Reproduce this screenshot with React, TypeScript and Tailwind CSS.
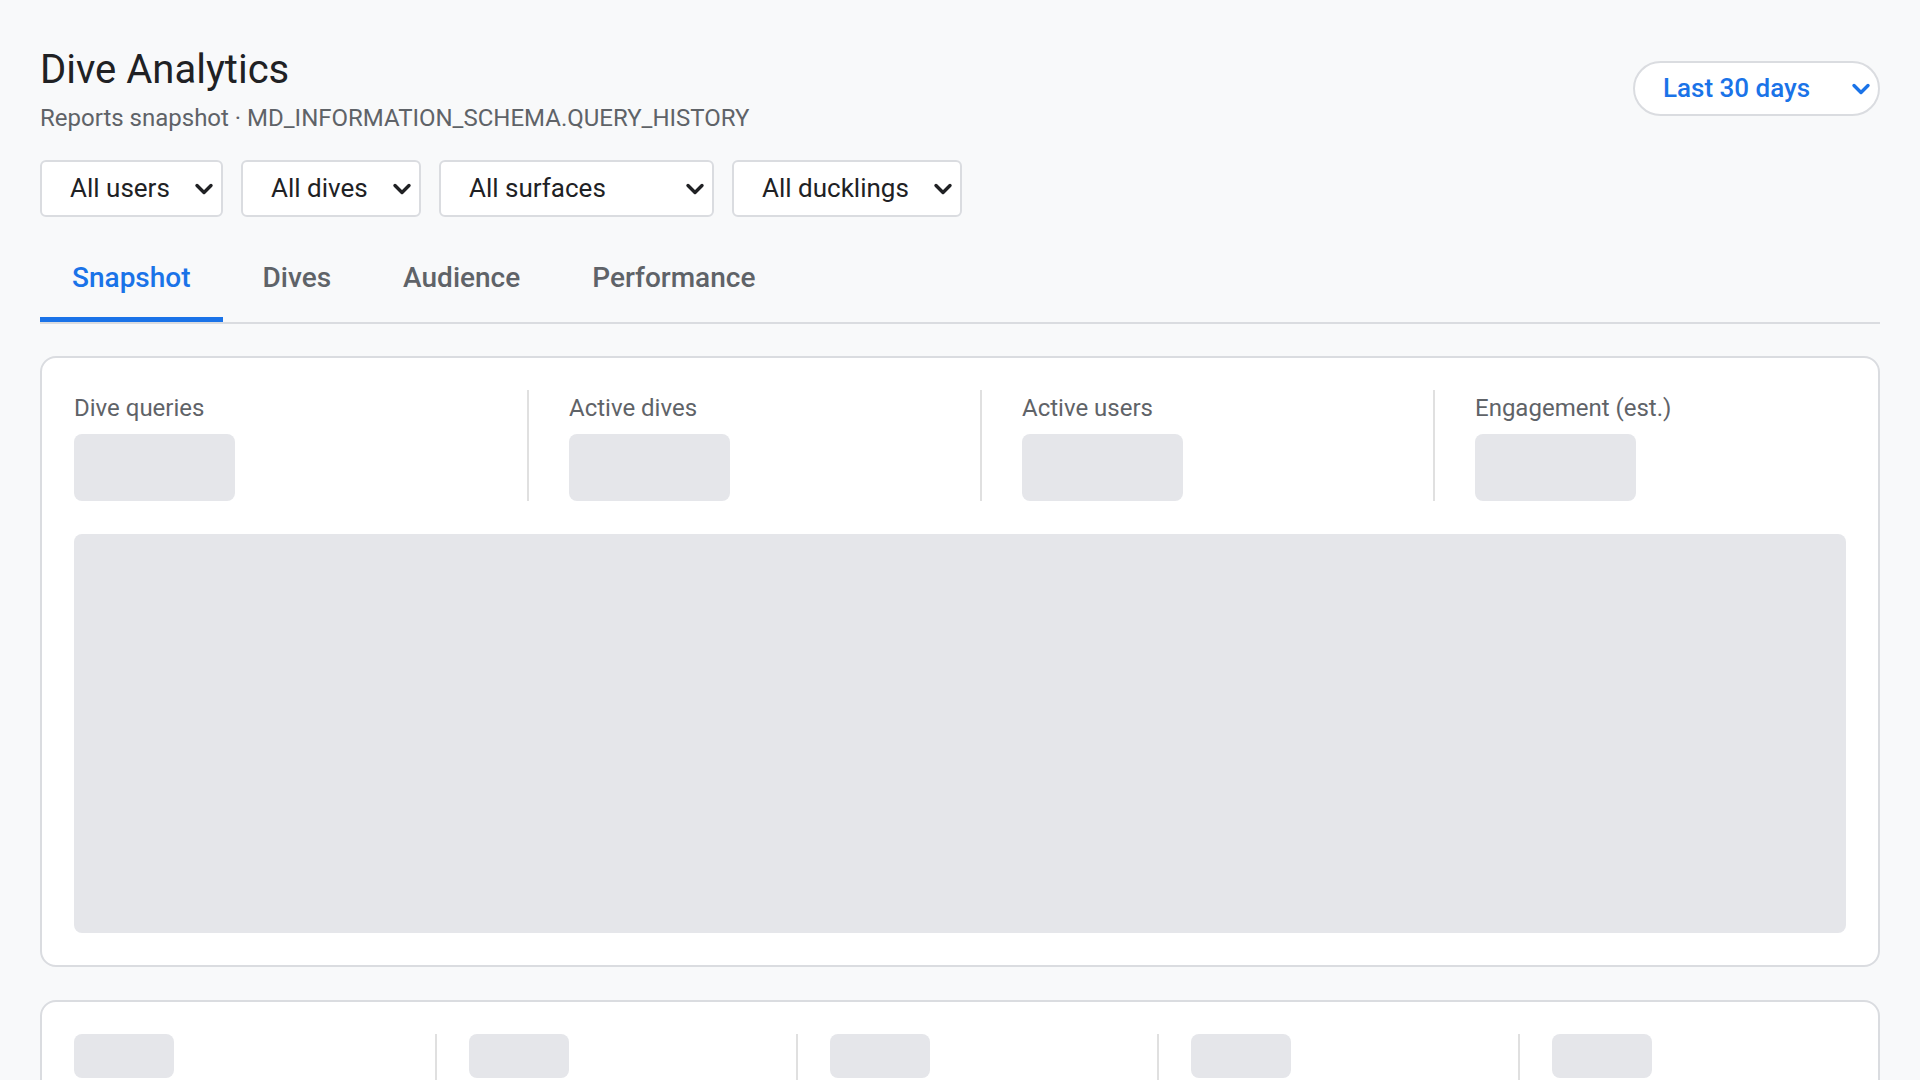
import React from "react";

const Chevron = ({ className = "" }: { className?: string }) => (
  <svg width="20" height="14" viewBox="0 0 20 14" className={className} fill="none">
    <path d="M3 3.5 L10 10.5 L17 3.5" stroke="currentColor" strokeWidth="3.4" strokeLinecap="round" strokeLinejoin="round" />
  </svg>
);

const filters = [
  { label: "All users", w: "w-[183px]" },
  { label: "All dives", w: "w-[180px]" },
  { label: "All surfaces", w: "w-[275px]" },
  { label: "All ducklings", w: "w-[230px]" },
];

const tabs = ["Snapshot", "Dives", "Audience", "Performance"];
const metrics = ["Dive queries", "Active dives", "Active users", "Engagement (est.)"];

export default function App() {
  return (
    <div
      className="min-h-screen bg-[#f8f9fa] px-10 pt-12 pb-10"
      style={{ fontFamily: "Roboto, 'Noto Sans', Arial, sans-serif" }}
    >
      <div className="flex items-start justify-between">
        <div>
          <h1 className="text-[40px] leading-[44px] font-normal text-[#202124]">Dive Analytics</h1>
          <p className="mt-[11px] text-[24px] leading-[30px] text-[#5f6368]">
            Reports snapshot · MD_INFORMATION_SCHEMA.QUERY_HISTORY
          </p>
        </div>
        <button className="mt-[13px] flex h-[55px] w-[247px] items-center justify-between rounded-full border-2 border-[#dadce0] bg-white pl-[28px] pr-[7px] text-[26px] font-medium text-[#1a73e8]">
          <span>Last 30 days</span>
          <Chevron className="text-[#1a73e8]" />
        </button>
      </div>

      <div className="mt-[27px] flex gap-[18px]">
        {filters.map((f) => (
          <button
            key={f.label}
            className={`${f.w} flex h-[57px] items-center justify-between rounded-[6px] border-2 border-[#dadce0] bg-white pl-[28px] pr-[7px] text-[26px] text-[#202124]`}
          >
            <span>{f.label}</span>
            <Chevron className="text-[#202124]" />
          </button>
        ))}
      </div>

      <div className="mt-[25px] flex gap-2 border-b-2 border-[#dadce0]">
        {tabs.map((t, i) => (
          <button
            key={t}
            className={`flex h-[80px] items-center border-b-[5px] px-8 pb-[3px] text-[28px] font-medium ${
              i === 0 ? "border-[#1a73e8] text-[#1a73e8]" : "border-transparent text-[#5f6368]"
            }`}
          >
            {t}
          </button>
        ))}
      </div>

      <div className="mt-8 rounded-2xl border-2 border-[#dadce0] bg-white px-8 pt-8 pb-8">
        <div className="grid grid-cols-4 gap-10">
          {metrics.map((m, i) => (
            <div key={m} className={i > 0 ? "border-l-2 border-[#e0e0e0] pl-10" : ""}>
              <div className="text-[24px] leading-[36px] text-[#5f6368]">{m}</div>
              <div className="mt-2 h-[67px] w-[161px] rounded-lg bg-[#e5e6ea]" />
            </div>
          ))}
        </div>
        <div className="mt-[33px] h-[399px] rounded-lg bg-[#e5e6ea]" />
      </div>

      <div className="mt-[33px] rounded-2xl border-2 border-[#dadce0] bg-white px-8 pt-8 pb-8">
        <div className="grid grid-cols-5 gap-[33px]">
          {[0, 1, 2, 3, 4].map((i) => (
            <div key={i} className={i > 0 ? "border-l-2 border-[#e0e0e0] pl-8" : ""}>
              <div className="h-[44px] w-[100px] rounded-lg bg-[#e5e6ea]" />
              <div className="mt-4 h-[24px] w-[180px] rounded bg-[#e5e6ea]" />
            </div>
          ))}
        </div>
      </div>
    </div>
  );
}
